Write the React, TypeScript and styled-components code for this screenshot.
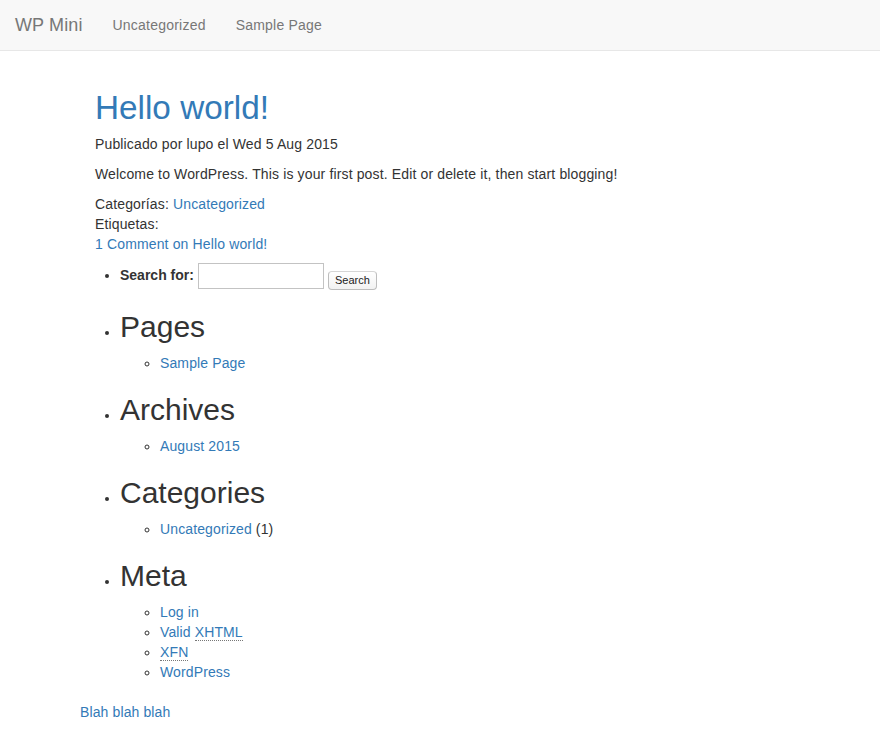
import styled, { createGlobalStyle } from "styled-components";

const GlobalStyle = createGlobalStyle`
  * {
    box-sizing: border-box;
  }
  body {
    margin: 0;
    background: #ffffff;
    color: #333333;
    font-family: "Liberation Sans", Arial, Helvetica, sans-serif;
    font-size: 14px;
    line-height: 20px;
    letter-spacing: 0.12px;
  }
  a {
    color: #337ab7;
    text-decoration: none;
  }
`;

const Navbar = styled.nav`
  display: flex;
  align-items: center;
  height: 51px;
  margin-bottom: 20px;
  background: #f8f8f8;
  border-bottom: 1px solid #e7e7e7;
`;

const Brand = styled.a`
  padding: 15px;
  font-size: 18px;
  line-height: 20px;
  color: #777777;
`;

const NavLink = styled.a`
  padding: 15px;
  font-size: 14px;
  line-height: 20px;
  color: #777777;
  letter-spacing: 0.22px;
`;

const Container = styled.div`
  display: flow-root;
  width: 750px;
  margin: 0 auto;
  padding: 0 15px;
`;

const Post = styled.article`
  padding: 0 15px;
  letter-spacing: 0.14px;
`;

const PostTitle = styled.h2`
  margin: 20px 0 10px;
  font-size: 33.3px;
  font-weight: 500;
  line-height: 33px;
  letter-spacing: 0;
`;

const Para = styled.p`
  margin: 0 0 10px;
`;

const Sidebar = styled.ul`
  margin: -1px 0 10px;
  padding-left: 40px;
  list-style: disc;
`;

const Widget = styled.li``;

const WidgetTitle = styled.h2`
  margin: 20px 0 10px;
  font-size: 30px;
  font-weight: 500;
  line-height: 33px;
  letter-spacing: 0;
  color: #333333;
`;

const SubList = styled.ul`
  margin: 0;
  padding-left: 40px;
  list-style: circle;
`;

const SearchForm = styled.form`
  display: inline-flex;
  align-items: flex-start;
`;

const Label = styled.label`
  margin-top: 2px;
  margin-right: 4px;
  font-weight: bold;
  letter-spacing: 0;
`;

const SearchInput = styled.input`
  width: 126px;
  height: 26px;
  margin: 0;
  padding: 2px 4px;
  border: 1px solid #c3c3c3;
  border-radius: 0;
  font-family: inherit;
  font-size: 13px;
  background: #ffffff;
`;

const SearchButton = styled.button`
  height: 19px;
  margin: 8px 0 0 4px;
  padding: 0 6px;
  border: 1px solid #bdbdbd;
  border-top-color: #d6d6d6;
  border-radius: 4px;
  background: linear-gradient(#ffffff, #f2f2f2);
  color: #222222;
  font-family: inherit;
  font-size: 11px;
  line-height: 17px;
  letter-spacing: 0;
`;

const Abbr = styled.abbr`
  text-decoration: none;
  border-bottom: 1px dotted #777777;
`;

const Footer = styled.footer`
  margin-top: 20px;
  padding-bottom: 10px;
`;

export default function App() {
  return (
    <>
      <GlobalStyle />
      <Navbar>
        <Brand href="#">WP Mini</Brand>
        <NavLink href="#">Uncategorized</NavLink>
        <NavLink href="#">Sample Page</NavLink>
      </Navbar>
      <Container>
        <Post>
          <PostTitle>
            <a href="#">Hello world!</a>
          </PostTitle>
          <Para>Publicado por lupo el Wed 5 Aug 2015</Para>
          <Para>
            Welcome to WordPress. This is your first post. Edit or delete it,
            then start blogging!
          </Para>
          <Para>
            Categorías: <a href="#">Uncategorized</a>
            <br />
            Etiquetas:
            <br />
            <a href="#">1 Comment on Hello world!</a>
          </Para>
        </Post>
        <Sidebar>
          <Widget>
            <SearchForm onSubmit={(e) => e.preventDefault()}>
              <Label htmlFor="s">Search for:</Label>
              <SearchInput id="s" type="text" />
              <SearchButton type="submit">Search</SearchButton>
            </SearchForm>
          </Widget>
          <Widget>
            <WidgetTitle>Pages</WidgetTitle>
            <SubList>
              <li>
                <a href="#">Sample Page</a>
              </li>
            </SubList>
          </Widget>
          <Widget>
            <WidgetTitle>Archives</WidgetTitle>
            <SubList>
              <li>
                <a href="#">August 2015</a>
              </li>
            </SubList>
          </Widget>
          <Widget>
            <WidgetTitle>Categories</WidgetTitle>
            <SubList>
              <li>
                <a href="#">Uncategorized</a> (1)
              </li>
            </SubList>
          </Widget>
          <Widget>
            <WidgetTitle>Meta</WidgetTitle>
            <SubList>
              <li>
                <a href="#">Log in</a>
              </li>
              <li>
                <a href="#">
                  Valid <Abbr title="eXtensible HyperText Markup Language">XHTML</Abbr>
                </a>
              </li>
              <li>
                <a href="#">
                  <Abbr title="XHTML Friends Network">XFN</Abbr>
                </a>
              </li>
              <li>
                <a href="#">WordPress</a>
              </li>
            </SubList>
          </Widget>
        </Sidebar>
        <Footer>
          <a href="#">Blah blah blah</a>
        </Footer>
      </Container>
    </>
  );
}
